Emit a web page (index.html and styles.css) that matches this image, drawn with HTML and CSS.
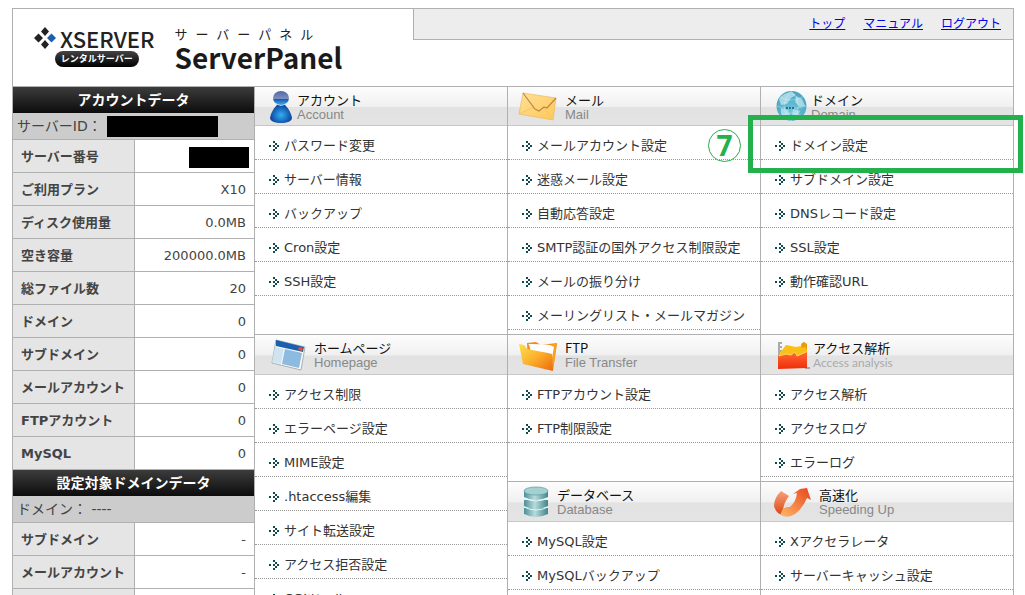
FILE: index.html
```html
<!DOCTYPE html>
<html lang="ja">
<head>
<meta charset="utf-8">
<title>ServerPanel</title>
<link rel="stylesheet" href="styles.css">
</head>
<body>
<svg width="0" height="0" class="defs" aria-hidden="true">
  <defs>
    <symbol id="arrow" viewBox="0 0 10 10"><path fill="#0f4a4f" d="M0 4h2v2H0zM4 0h2v2h-2zM6 2h2v2h-2zM8 4h2v2h-2zM6 6h2v2h-2zM4 8h2v2h-2zM4 4h2v2h-2z"/></symbol>
    <radialGradient id="blue" cx=".5" cy=".6" r=".6"><stop offset="0" stop-color="#2fb0f5"/><stop offset="1" stop-color="#0b2f8c"/></radialGradient>
    <linearGradient id="head" x2="0" y2="1"><stop offset="0" stop-color="#5067a8"/><stop offset=".55" stop-color="#7c90bf"/><stop offset=".6" stop-color="#1d55b5"/><stop offset="1" stop-color="#3bb4f2"/></linearGradient>
    <linearGradient id="paper" x2="1" y2="1"><stop offset="0" stop-color="#ffe09a"/><stop offset="1" stop-color="#ffc757"/></linearGradient>
    <radialGradient id="globe" cx=".5" cy=".65" r=".6"><stop offset="0" stop-color="#6fc6dc"/><stop offset="1" stop-color="#4aa5bf"/></radialGradient>
    <linearGradient id="folder" x2="1" y2="1"><stop offset="0" stop-color="#fde04a"/><stop offset=".5" stop-color="#fbaf2c"/><stop offset="1" stop-color="#ec6a0c"/></linearGradient>
    <linearGradient id="red" x2="0" y2="1"><stop offset="0" stop-color="#ff6a35"/><stop offset="1" stop-color="#f02d08"/></linearGradient>
    <linearGradient id="disk"><stop offset="0" stop-color="#4c9095"/><stop offset=".45" stop-color="#b7dcdd"/><stop offset="1" stop-color="#3f858c"/></linearGradient>
    <linearGradient id="band" x2="0" y2="1"><stop offset="0" stop-color="#f5a27c"/><stop offset="1" stop-color="#dd4413"/></linearGradient>
    <linearGradient id="orange" x1="0" y1="1" x2="1" y2="0"><stop offset="0" stop-color="#fbb866"/><stop offset=".4" stop-color="#f58a4a"/><stop offset="1" stop-color="#e8431d"/></linearGradient>
  </defs>
</svg>
<div class="page">
  <header class="top">
    <div class="brand">
      <div class="logo">
        <div class="logo-name">
          <svg width="22" height="22" viewBox="0 0 22 22" aria-hidden="true"><path fill="#222" d="M11 0l4 4.500-4 4.500-4-4.500zM4.500 6.500l4.500 4.500-4.500 4.500-4.500-4.500zM11 13l4 4.500-4 4.500-4-4.500z"/><path fill="#1c5fae" d="M17.500 6.500l4.500 4.500-4.500 4.500-4.500-4.500z"/></svg>
          <span>XSERVER</span>
        </div>
        <span class="logo-tag">レンタルサーバー</span>
      </div>
      <div class="product">
        <span class="product-kana">サーバーパネル</span>
        <h1>ServerPanel</h1>
      </div>
    </div>
    <nav class="nav"><a href="#">トップ</a><a href="#">マニュアル</a><a href="#">ログアウト</a></nav>
  </header>
  <div class="body">
    <aside class="side">
      <h2>アカウントデータ</h2>
      <p class="target">サーバーID：<span class="mask mask-id"></span></p>
      <table>
        <tr><th>サーバー番号</th><td><span class="mask mask-no"></span></td></tr>
        <tr><th>ご利用プラン</th><td>X10</td></tr>
        <tr><th>ディスク使用量</th><td>0.0MB</td></tr>
        <tr><th>空き容量</th><td>200000.0MB</td></tr>
        <tr><th>総ファイル数</th><td>20</td></tr>
        <tr><th>ドメイン</th><td>0</td></tr>
        <tr><th>サブドメイン</th><td>0</td></tr>
        <tr><th>メールアカウント</th><td>0</td></tr>
        <tr><th>FTPアカウント</th><td>0</td></tr>
        <tr><th>MySQL</th><td>0</td></tr>
      </table>
      <h2>設定対象ドメインデータ</h2>
      <p class="target">ドメイン： ----</p>
      <table>
        <tr><th>サブドメイン</th><td>-</td></tr>
        <tr><th>メールアカウント</th><td>-</td></tr>
        <tr><th></th><td></td></tr>
      </table>
    </aside>
    <main class="menu">
      <section class="first">
        <div class="head">
          <svg width="42" height="39" viewBox="0 0 42 39" aria-hidden="true"><path fill="url(#blue)" d="M26 16c6 2 10 9 11 15 0 3-5 5-11 5s-11-2-11-5c1-6 5-13 11-15z"/><ellipse cx="26" cy="11" rx="8" ry="7" fill="url(#head)"/><path d="M21 17q5 3 10 0" stroke="#a9dcf2" fill="none"/></svg>
          <div><h2>アカウント</h2><span class="en">Account</span></div>
        </div>
        <ul>
          <li><a href="#"><svg class="arrow"><use href="#arrow"/></svg>パスワード変更</a></li>
          <li><a href="#"><svg class="arrow"><use href="#arrow"/></svg>サーバー情報</a></li>
          <li><a href="#"><svg class="arrow"><use href="#arrow"/></svg>バックアップ</a></li>
          <li><a href="#"><svg class="arrow"><use href="#arrow"/></svg>Cron設定</a></li>
          <li><a href="#"><svg class="arrow"><use href="#arrow"/></svg>SSH設定</a></li>
        </ul>
      </section>
      <section class="first">
        <div class="head">
          <svg width="57" height="39" viewBox="0 0 57 39" aria-hidden="true"><path fill="url(#paper)" stroke="#e9b450" stroke-width=".6" d="M15 6l33 5-3 22-34-6z"/><path d="M11 27l15-7M45 33l-10-13" fill="none" stroke="#f3c768"/><path d="M15 6l12 16 4 2 5-4 3 1 9-10" fill="none" stroke="#b98a45" stroke-width="1.2"/></svg>
          <div><h2>メール</h2><span class="en">Mail</span></div>
        </div>
        <ul>
          <li><a href="#"><svg class="arrow"><use href="#arrow"/></svg>メールアカウント設定</a></li>
          <li><a href="#"><svg class="arrow"><use href="#arrow"/></svg>迷惑メール設定</a></li>
          <li><a href="#"><svg class="arrow"><use href="#arrow"/></svg>自動応答設定</a></li>
          <li><a href="#"><svg class="arrow"><use href="#arrow"/></svg>SMTP認証の国外アクセス制限設定</a></li>
          <li><a href="#"><svg class="arrow"><use href="#arrow"/></svg>メールの振り分け</a></li>
          <li><a href="#"><svg class="arrow"><use href="#arrow"/></svg>メーリングリスト・メールマガジン</a></li>
        </ul>
      </section>
      <section class="first marked">
        <div class="head">
          <svg width="50" height="39" viewBox="0 0 50 39" aria-hidden="true"><circle cx="30.500" cy="19" r="15" fill="url(#globe)"/><path fill="#c3e6ef" d="M18 12q5-7 13-7l4 3-5 3-4 6-6 1zM35 9l6 3 3 7-5 1-5-5zM20 21l7 2 2 5-4 3-5-4zM32 22l7 2-3 7-5-2z" opacity=".75"/><path d="M16 19q14 5 29 0M19 10q11 6 23 0M19 29q11-6 23 0M30 4q-14 15 0 30M30 4q15 15 0 30" fill="none" stroke="#dff3f8" stroke-width=".4"/><path d="M25 21h9" stroke="#23718c" stroke-width="2" stroke-dasharray="2 1"/></svg>
          <div><h2>ドメイン</h2><span class="en">Domain</span></div>
        </div>
        <ul>
          <li><a href="#"><svg class="arrow"><use href="#arrow"/></svg>ドメイン設定</a></li>
          <li><a href="#"><svg class="arrow"><use href="#arrow"/></svg>サブドメイン設定</a></li>
          <li><a href="#"><svg class="arrow"><use href="#arrow"/></svg>DNSレコード設定</a></li>
          <li><a href="#"><svg class="arrow"><use href="#arrow"/></svg>SSL設定</a></li>
          <li><a href="#"><svg class="arrow"><use href="#arrow"/></svg>動作確認URL</a></li>
        </ul>
        <span class="step">7</span>
        <span class="highlight"></span>
      </section>
      <section class="tall">
        <div class="head">
          <svg width="59" height="39" viewBox="0 0 59 39" aria-hidden="true"><path fill="#f8fafb" stroke="#a9b0b5" d="M21 5l29 7-4 23-29-7z"/><path fill="#1c5fae" d="M21 5l28 7-1 5-27-6z"/><path fill="#e8502a" d="M44 12l4 1-1 3-4-1z"/><path fill="#cfe3f1" d="M20 12l9 2-3 15-9-2z"/><path fill="#8dbbe0" d="M30 14l17 4-3 15-17-4z"/></svg>
          <div><h2>ホームページ</h2><span class="en">Homepage</span></div>
        </div>
        <ul>
          <li><a href="#"><svg class="arrow"><use href="#arrow"/></svg>アクセス制限</a></li>
          <li><a href="#"><svg class="arrow"><use href="#arrow"/></svg>エラーページ設定</a></li>
          <li><a href="#"><svg class="arrow"><use href="#arrow"/></svg>MIME設定</a></li>
          <li><a href="#"><svg class="arrow"><use href="#arrow"/></svg>.htaccess編集</a></li>
          <li><a href="#"><svg class="arrow"><use href="#arrow"/></svg>サイト転送設定</a></li>
          <li><a href="#"><svg class="arrow"><use href="#arrow"/></svg>アクセス拒否設定</a></li>
          <li><a href="#"><svg class="arrow"><use href="#arrow"/></svg>CGIツール</a></li>
        </ul>
      </section>
      <section>
        <div class="head">
          <svg width="57" height="39" viewBox="0 0 57 39" aria-hidden="true"><path fill="#f28a1d" d="M19 8l9-1 5 3 16-2-4 27-25-8z"/><path fill="#fff" d="M21 9l20 1 5 4-2 17-20-8z"/><path fill="#f6a024" d="M42 10l7-2-4 27-5-4z"/><path fill="#fff" d="M20 9l22 1 4 2-3 16-10-8z"/><path fill="url(#folder)" d="M11 9l5 1 3 4 21 4 4 1 1 17-30-7z"/></svg>
          <div><h2>FTP</h2><span class="en">File Transfer</span></div>
        </div>
        <ul>
          <li><a href="#"><svg class="arrow"><use href="#arrow"/></svg>FTPアカウント設定</a></li>
          <li><a href="#"><svg class="arrow"><use href="#arrow"/></svg>FTP制限設定</a></li>
        </ul>
      </section>
      <section>
        <div class="head">
          <svg width="52" height="39" viewBox="0 0 52 39" aria-hidden="true"><path d="M18 7v25M18 8h3M18 12h3M18 16h3" stroke="#aaa" stroke-width="2"/><path fill="#fbbf18" d="M18 19l7-9 10 2 5-1 2-4 4 2v15l-28 4z"/><path fill="#e99c0c" d="M40 9l3-2 3 2v6l-2-3-3 1z"/><path fill="url(#red)" d="M17 21l8-2 5 1 4-3 2 4 10-4v16l-29 1z"/><path d="M18 21l7-2 5 1 4-3 2 4 9-4" stroke="#ffd75a" fill="none"/><path d="M44 33h5" stroke="#8a5a40"/></svg>
          <div><h2>アクセス解析</h2><span class="en narrow">Access analysis</span></div>
        </div>
        <ul>
          <li><a href="#"><svg class="arrow"><use href="#arrow"/></svg>アクセス解析</a></li>
          <li><a href="#"><svg class="arrow"><use href="#arrow"/></svg>アクセスログ</a></li>
          <li><a href="#"><svg class="arrow"><use href="#arrow"/></svg>エラーログ</a></li>
        </ul>
      </section>
      <section>
        <div class="head">
          <svg width="49" height="39" viewBox="0 0 49 39" aria-hidden="true"><g fill="url(#disk)"><path d="M16 26v6q12 6 24 0v-6zM16 18v6q12 6 24 0v-6zM16 9v6q12 6 24 0V9z"/></g><path d="M16 16q12 6 24 0M16 25q12 6 24 0" fill="none" stroke="#e4f3f3"/><ellipse cx="28" cy="9" rx="12" ry="4" fill="#a5d0d2" stroke="#5a9ca1" stroke-width=".7"/></svg>
          <div><h2>データベース</h2><span class="en">Database</span></div>
        </div>
        <ul>
          <li><a href="#"><svg class="arrow"><use href="#arrow"/></svg>MySQL設定</a></li>
          <li><a href="#"><svg class="arrow"><use href="#arrow"/></svg>MySQLバックアップ</a></li>
        </ul>
      </section>
      <section>
        <div class="head">
          <svg width="58" height="39" viewBox="0 0 58 39" aria-hidden="true"><path fill="url(#band)" d="M20 9l8 5q-7 9-6 19-7-1-9-9 0-8 7-15z"/><path fill="url(#orange)" d="M20 31q2-7 9-6 6-5 7-14l-4 1 7-5 7-1 4 12-4-2q-4 10-12 16-6 4-12 2-3-1-2-3z"/></svg>
          <div><h2>高速化</h2><span class="en">Speeding Up</span></div>
        </div>
        <ul>
          <li><a href="#"><svg class="arrow"><use href="#arrow"/></svg>Xアクセラレータ</a></li>
          <li><a href="#"><svg class="arrow"><use href="#arrow"/></svg>サーバーキャッシュ設定</a></li>
        </ul>
      </section>
    </main>
  </div>
</div>
</body>
</html>
```
FILE: styles.css
```css
* { box-sizing: border-box; }
html { height: 100%; overflow: hidden; }
body {
  margin: 0;
  padding: 8px 11px 0 12px;
  background: #fff;
  color: #333;
  font: 13px/20px "DejaVu Sans", "Noto Sans CJK JP", sans-serif;
}
h1, h2, p, ul { margin: 0; padding: 0; }
.defs { position: absolute; }
.page { border: 1px solid #b0b0b0; border-bottom: 0; }

.top { display: flex; justify-content: space-between; align-items: flex-start; min-height: 77px; }
.brand { display: flex; gap: 20px; padding: 16px 0 0 21px; }
.logo { display: flex; flex-direction: column; align-items: center; }
.logo-name {
  display: flex; align-items: center; gap: 4px;
  font: 500 22px/26px "Noto Sans CJK JP", sans-serif; color: #222;
}
.logo-tag {
  padding: 0 6px; border-radius: 8px; margin-left: 5px;
  background: linear-gradient(#444, #000);
  color: #fff; font: bold 9px/16px "Noto Sans CJK JP", sans-serif;
}
.product-kana { display: block; font: 13px/18px "Noto Sans CJK JP", sans-serif; letter-spacing: 8px; color: #222; }
h1 { font: bold 28px/28px "Noto Sans CJK JP", sans-serif; color: #1a1a1a; }
.nav {
  display: flex; justify-content: flex-end; gap: 18px; width: 60%;
  padding: 5px 12px; border: 1px solid #b0b0b0; border-width: 0 0 1px 1px;
  background: #ededed; font-size: 12px;
}
.nav a { color: #00e; }

.body { display: flex; border-top: 1px solid #b0b0b0; }
.side { flex: 0 0 242px; border-right: 1px solid #b0b0b0; }
.side h2 {
  background: linear-gradient(#3c3c3c, #0c0c0c);
  color: #fff; text-align: center; font-size: 14px; line-height: 26px;
}
.target {
  display: flex; align-items: center; gap: 5px; height: 27px; padding-left: 4px;
  border-bottom: 1px solid #b0b0b0; background: #ccc; color: #444; font-size: 14px;
}
.mask { display: inline-block; height: 21px; background: #000; }
.mask-id { width: 111px; }
.mask-no { width: 60px; margin-right: -3px; vertical-align: middle; }
.side table { width: 100%; border-collapse: separate; border-spacing: 0; table-layout: fixed; }
.side th, .side td { height: 33px; padding: 2px 8px 0; border-bottom: 1px solid #b0b0b0; color: #444; white-space: nowrap; }
.side th { width: 122px; border-right: 1px solid #b0b0b0; background: #e5e5e5; text-align: left; }
.side td { text-align: right; }

.menu {
  flex: 1; display: grid; gap: 1px; background: #b0b0b0;
  grid-template-columns: repeat(3, minmax(0, 1fr));
  grid-template-rows: auto auto 1fr;
}
section { background: #fff; padding-bottom: 4px; }
.tall { grid-row: span 2; }
.head {
  display: flex; height: 40px; border-bottom: 1px solid #c8c8c8;
  background: linear-gradient(#fdfdfd, #f0f0f0 52%, #e2e2e2 53%, #e4e4e4);
}
.first .head { height: 39px; }
.head h2 { padding-top: 5px; color: #111; font: 400 13px/16px "Noto Sans CJK JP", sans-serif; }
.en { display: block; color: #888; font: 13px/13px "Liberation Sans", sans-serif; }
.narrow { color: #aaa; font-family: Lato, sans-serif; font-size: 12px; }
ul { list-style: none; }
li { height: 34px; border-bottom: 1px dotted #999; }
li a {
  display: flex; align-items: center; gap: 5px; height: 33px; padding: 6px 0 0 14px;
  color: #333; text-decoration: none; white-space: nowrap;
}
.arrow { width: 10px; height: 10px; }

.marked { position: relative; }
.highlight {
  position: absolute; inset: 28px -10px auto -13px; height: 58px;
  border: 5px solid #22b14c; pointer-events: none;
}
.step {
  position: absolute; top: 42px; left: -53px; width: 33px; height: 33px;
  border: 1px solid #22b14c; border-radius: 50%;
  color: #22b14c; text-align: center; font: bold 28px/31px "Noto Sans", sans-serif;
}
```
